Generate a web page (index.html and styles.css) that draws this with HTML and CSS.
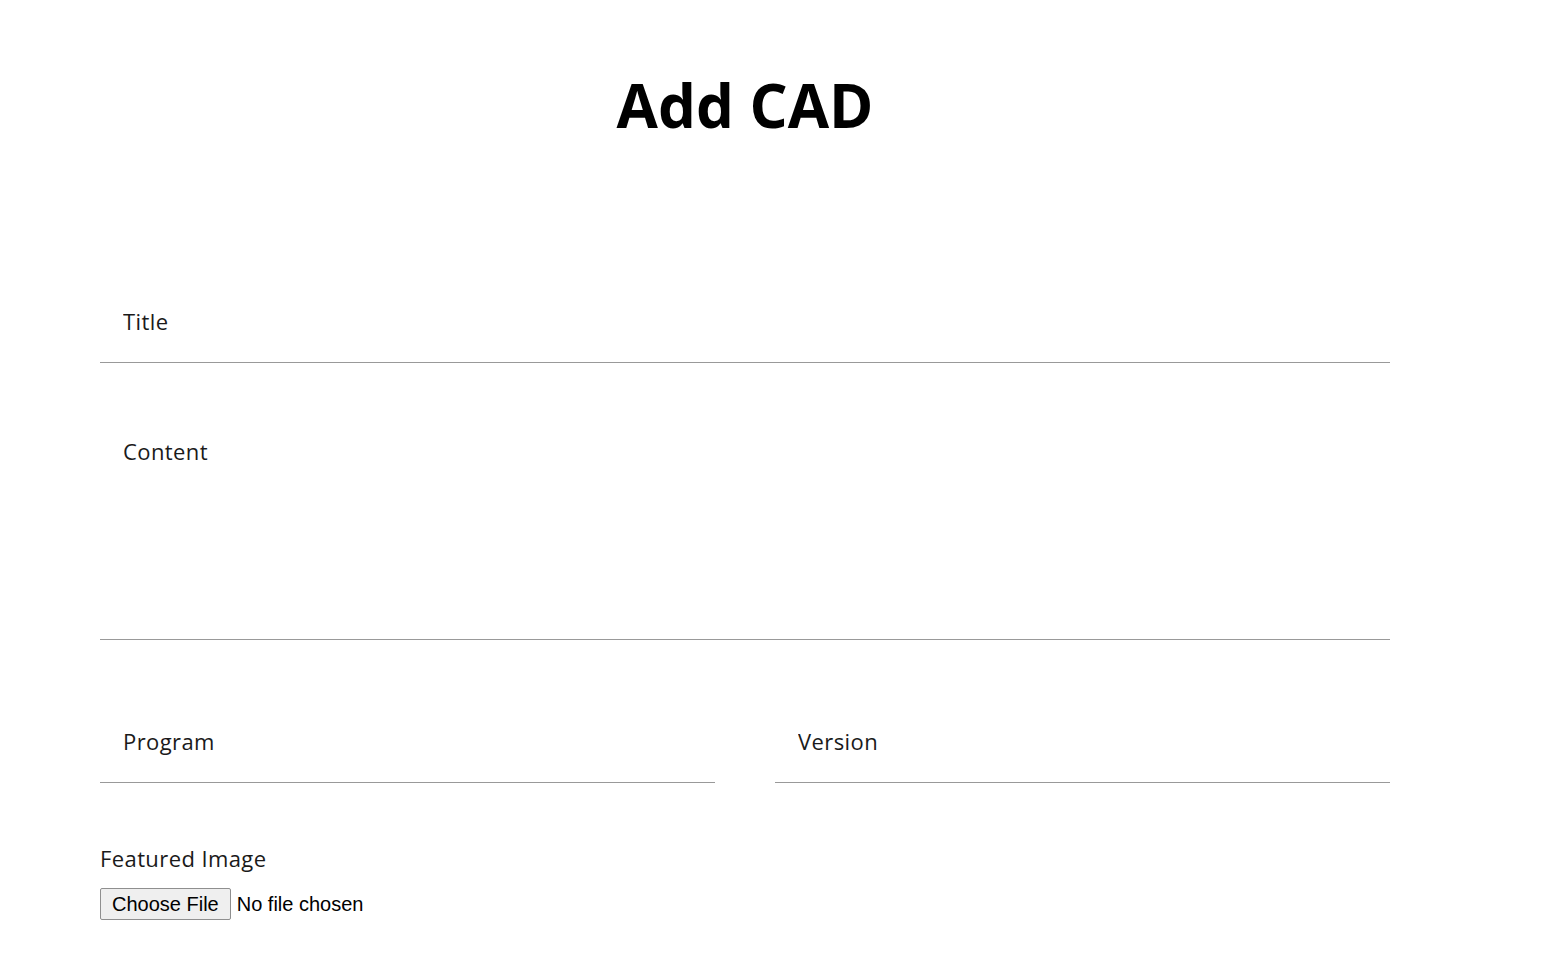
FILE: index.html
```html
<!DOCTYPE html>
<html lang="en">
<head>
<meta charset="utf-8">
<title>Add CAD</title>
<link rel="stylesheet" href="styles.css">
</head>
<body>
<main class="page">
  <h1 class="page-title">Add CAD</h1>
  <form class="cad-form">
    <input class="field field-title" type="text" name="title" placeholder="Title">
    <textarea class="field field-content" name="content" placeholder="Content"></textarea>
    <div class="field-row">
      <input class="field" type="text" name="program" placeholder="Program">
      <input class="field" type="text" name="version" placeholder="Version">
    </div>
    <div class="upload">
      <label class="upload-label" for="image">Featured Image</label>
      <input class="upload-input" type="file" id="image" name="image">
    </div>
  </form>
</main>
</body>
</html>
```

FILE: styles.css
```css
html, body {
  margin: 0;
  padding: 0;
  background: #ffffff;
}

body {
  font-family: "Open Sans", "Liberation Sans", sans-serif;
  color: #1a1a1a;
}

.page {
  width: 1290px;
  margin: 0 0 0 100px;
}

.page-title {
  margin: 69px 0 0;
  font-family: "Open Sans", sans-serif;
  font-weight: 700;
  font-size: 60px;
  line-height: 72px;
  text-align: center;
  color: #000;
}

.cad-form {
  margin-top: 141px;
  display: flex;
  flex-direction: column;
}

.field {
  display: block;
  width: 100%;
  box-sizing: border-box;
  margin: 0;
  padding: 24px 22px 26px 23px;
  border: none;
  border-bottom: 1px solid #999;
  border-radius: 0;
  background: transparent;
  font-family: "Open Sans", sans-serif;
  font-size: 22px;
  line-height: 30px;
  letter-spacing: 0.4px;
  color: #1a1a1a;
  outline: none;
}

.field::placeholder {
  color: #1a1a1a;
  opacity: 1;
}

.field-content {
  margin-top: 50px;
  height: 227px;
  padding-top: 23px;
  resize: none;
}

.field-row {
  margin-top: 62px;
  display: grid;
  grid-template-columns: 1fr 1fr;
  column-gap: 60px;
}

.upload {
  margin-top: 60px;
  display: flex;
  flex-direction: column;
  align-items: flex-start;
}

.upload-label {
  font-size: 22px;
  line-height: 30px;
  letter-spacing: 0.4px;
  color: #1a1a1a;
}

.upload-input {
  margin-top: 15px;
  font-family: "Liberation Sans", Arial, sans-serif;
  font-size: 20px;
  color: #000;
}

.upload-input::file-selector-button {
  font-family: "Liberation Sans", Arial, sans-serif;
  font-size: 20px;
  line-height: 23px;
  padding: 4px 11px 3px;
  margin: 0 6px 0 0;
  border: 1px solid #8f8f8f;
  border-radius: 2px;
  background: #efefef;
  color: #000;
}
```
